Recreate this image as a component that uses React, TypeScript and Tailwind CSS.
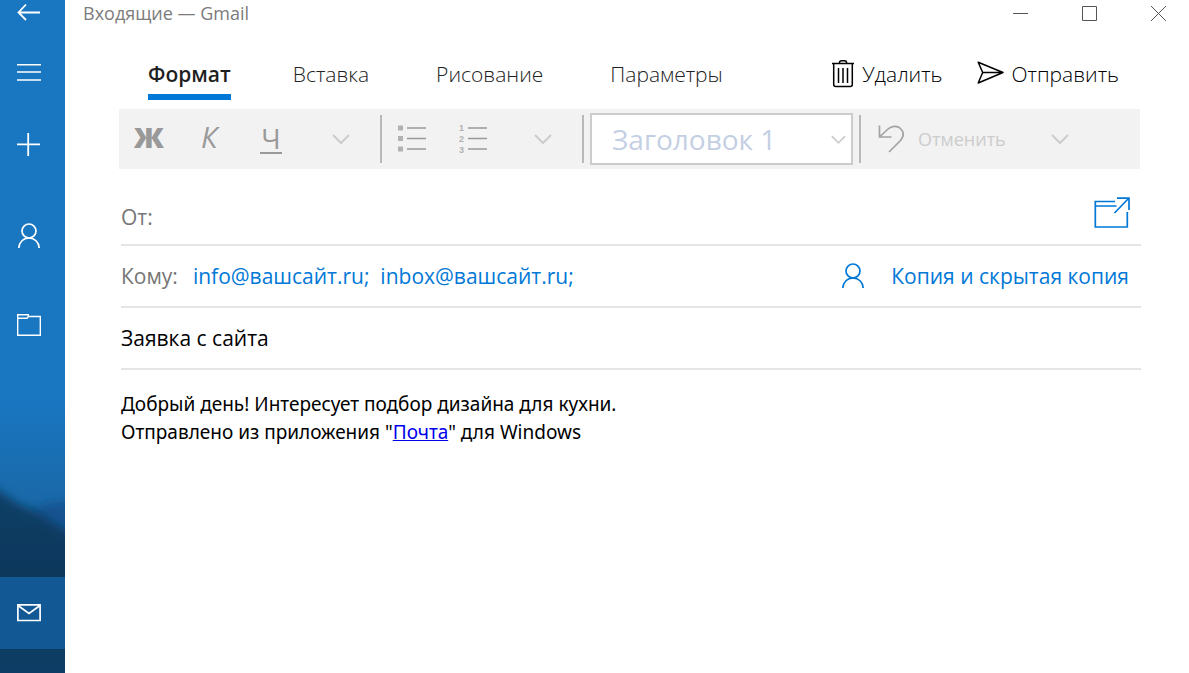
import type { ReactNode } from "react";

const tabs = ["Вставка", "Рисование", "Параметры"];

function PersonIcon() {
  return (
    <svg width="24" height="26" viewBox="0 0 24 26" fill="none" stroke="currentColor" strokeWidth="1.7" aria-hidden>
      <circle cx="12" cy="8" r="7" />
      <path d="M1.800 25C2.200 19 6.400 15 12 15s9.800 4 10.200 10" />
    </svg>
  );
}

function Chevron({ size = 18 }: { size?: number }) {
  return (
    <svg width={size} height={size} viewBox="0 0 18 18" fill="none" stroke="currentColor" strokeWidth="2" aria-hidden>
      <path d="M1 5l8 8 8-8" />
    </svg>
  );
}

function Divider() {
  return <div className="h-12 w-[2px] shrink-0 bg-[#b8b8b8]" />;
}

function NavButton({ label, className, children }: { label: string; className: string; children: ReactNode }) {
  return (
    <button type="button" aria-label={label} className={`flex w-full shrink-0 items-center pl-[17px] ${className}`}>
      {children}
    </button>
  );
}

function Sidebar() {
  return (
    <aside className="relative isolate flex w-[65px] shrink-0 flex-col bg-[#1976c1] text-white">
      {/* размытый силуэт гор на фоне */}
      <div className="absolute inset-x-0 bottom-0 -z-10 h-[273px] overflow-hidden bg-linear-to-b from-[#1976c1] via-[#1a6aaa] via-35% to-[#08365c] to-100%">
        <svg width="65" height="273" viewBox="0 0 65 273" aria-hidden>
          <defs>
            <filter id="haze" x="-50%" y="-50%" width="200%" height="200%">
              <feGaussianBlur stdDeviation="5" />
            </filter>
            <linearGradient id="ridge" x1="0" y1="0" x2="0" y2="1">
              <stop offset="0" stopColor="#0b4068" />
              <stop offset="0.45" stopColor="#07365b" />
              <stop offset="1" stopColor="#0a4069" />
            </linearGradient>
          </defs>
          <path d="M25 116L48 104 90 98v60H25z" fill="#145291" filter="url(#haze)" />
          <path d="M-20 78L2 93 18 104 38 113 55 124 90 144v160H-20z" fill="url(#ridge)" filter="url(#haze)" />
        </svg>
      </div>

      <NavButton label="Назад" className="h-6">
        <svg width="24" height="18" viewBox="0 0 24 18" fill="none" stroke="currentColor" strokeWidth="1.8" aria-hidden>
          <path d="M23 9.500H1.500M9 1.500L1.500 9.500 9 17" />
        </svg>
      </NavButton>
      <NavButton label="Меню" className="mt-3 h-18">
        <svg width="24" height="18" viewBox="0 0 24 18" stroke="currentColor" strokeWidth="1.6" aria-hidden>
          <path d="M0 1.800h24M0 9h24M0 17h24" />
        </svg>
      </NavButton>
      <NavButton label="Создать сообщение" className="h-18">
        <svg width="24" height="24" viewBox="0 0 24 24" stroke="currentColor" strokeWidth="1.8" aria-hidden>
          <path d="M0 12.300h23M11.200 1v23" />
        </svg>
      </NavButton>
      <NavButton label="Учетные записи" className="mt-5 h-18">
        <PersonIcon />
      </NavButton>
      <NavButton label="Папки" className="mt-[17px] h-18">
        <svg width="24" height="22" viewBox="0 0 24 22" fill="none" stroke="currentColor" strokeWidth="1.400" aria-hidden>
          <path d="M.700.700h10.600v1.800h12v18.800H.700zM.700 4.300h9.300l1.300-1.800" />
        </svg>
      </NavButton>
      <NavButton label="Почта" className="mt-auto mb-6 h-18 bg-[#125894]">
        <svg width="24" height="18" viewBox="0 0 24 18" fill="none" stroke="currentColor" strokeWidth="1.700" aria-hidden>
          <path d="M.900.900h22.200v15.600H.900zM1 1.500l11 8 11-8" />
        </svg>
      </NavButton>
    </aside>
  );
}

function TitleBar() {
  return (
    <header className="flex h-7 items-center justify-between pr-[22px] pl-[18px]">
      <h1 className="pb-[2px] text-[18px] leading-6 text-[#7c7c7c]">Входящие — Gmail</h1>
      <div className="flex gap-[53px] text-[#555]">
        <button type="button" aria-label="Свернуть">
          <svg width="16" height="16" viewBox="0 0 16 16" stroke="currentColor" aria-hidden>
            <path d="M0 7.500h15" />
          </svg>
        </button>
        <button type="button" aria-label="Развернуть">
          <svg width="16" height="16" viewBox="0 0 16 16" fill="none" stroke="currentColor" aria-hidden>
            <path d="M.500.500h14v14H.500z" />
          </svg>
        </button>
        <button type="button" aria-label="Закрыть">
          <svg width="16" height="16" viewBox="0 0 16 16" stroke="currentColor" aria-hidden>
            <path d="M0 0l15 15M15 0L0 15" />
          </svg>
        </button>
      </div>
    </header>
  );
}

function CommandBar() {
  return (
    <div className="flex items-start justify-between pt-[30px] pr-[70px] pb-[9px] pl-[83px] text-[21px] leading-8">
      <nav className="flex">
        <button type="button" className="mr-[62px] border-b-6 border-[#0078d7] pb-1 font-semibold text-[#1f1f1f]">
          Формат
        </button>
        <div className="flex gap-[67px] font-light text-[#222]">
          {tabs.map((tab) => (
            <button key={tab} type="button" className="pb-[10px]">
              {tab}
            </button>
          ))}
        </div>
      </nav>
      <div className="flex gap-[34px] font-light text-black">
        <button type="button" className="flex items-center gap-2">
          <svg width="22" height="28" viewBox="0 0 22 28" fill="none" stroke="currentColor" strokeWidth="1.500" aria-hidden>
            <path d="M0 3.500h22M7.500 3.500V2.500Q7.500.800 9.500.800h3q2 0 2 1.700v1M1.700 4v20.500q0 2 2 2h14.600q2 0 2-2V4M6.500 8v15M11 8v15M15.500 8v15" />
          </svg>
          Удалить
        </button>
        <button type="button" className="flex items-center gap-2">
          <svg width="27" height="26" viewBox="0 0 27 26" fill="none" stroke="currentColor" strokeWidth="1.500" strokeLinejoin="round" aria-hidden>
            <path d="M1.200 1.200L26 11.500 1.200 22 5.700 11.500zM5.700 11.500H26" />
          </svg>
          Отправить
        </button>
      </div>
    </div>
  );
}

function Toolbar() {
  return (
    <div className="mr-[49px] ml-[54px] flex h-[60px] items-center bg-[#f2f2f2] text-[#999]">
      <button type="button" aria-label="Полужирный" className="w-[60px] pb-1 text-[29px] leading-9 font-extrabold">
        Ж
      </button>
      <button type="button" aria-label="Курсив" className="w-[60px] pb-1 text-[29px] leading-9 italic">
        К
      </button>
      <button type="button" aria-label="Подчеркнутый" className="ml-[21px] w-[22px] border-b-2 border-[#999] text-[28px] leading-7">
        Ч
      </button>
      <button type="button" aria-label="Другие параметры шрифта" className="ml-[50px] text-[#ccc]">
        <Chevron />
      </button>
      <div className="mr-4 ml-[30px]">
        <Divider />
      </div>
      <button type="button" aria-label="Маркированный список">
        <svg width="30" height="28" viewBox="0 0 30 28" stroke="#999" strokeWidth="1.600" aria-hidden>
          <path d="M0 .500h5v5H0zM0 11h5v5H0zM0 21.500h5v5H0z" fill="#b2b2b2" stroke="none" />
          <path d="M9 3h19M9 13.500h19M9 24h19" />
        </svg>
      </button>
      <button type="button" aria-label="Нумерованный список" className="ml-[31px] flex items-center gap-1">
        <span className="flex flex-col font-['Liberation_Sans',sans-serif] text-[9px] leading-[11px] font-bold text-[#b2b2b2]">
          <span>1</span>
          <span>2</span>
          <span>3</span>
        </span>
        <svg width="19" height="28" viewBox="0 0 19 28" stroke="currentColor" strokeWidth="1.600" aria-hidden>
          <path d="M0 3h19M0 13.500h19M0 24h19" />
        </svg>
      </button>
      <button type="button" aria-label="Другие параметры абзаца" className="ml-[47px] text-[#ccc]">
        <Chevron />
      </button>
      <div className="mr-[6px] ml-[30px]">
        <Divider />
      </div>
      <div className="relative">
        <select
          aria-label="Стиль"
          className="h-[52px] w-[263px] appearance-none border-2 border-[#ccc] bg-white pl-5 text-[28px] text-[#c4cfe3]"
        >
          <option>Заголовок 1</option>
        </select>
        <span className="pointer-events-none absolute top-[19px] right-[7px] text-[#ccc]">
          <Chevron size={15} />
        </span>
      </div>
      <div className="mr-[17px] ml-[6px]">
        <Divider />
      </div>
      <button type="button" className="flex items-center gap-[14px] text-[18px] text-[#ccc]">
        <svg width="26" height="28" viewBox="0 0 26 28" fill="none" stroke="#a3a3a3" strokeWidth="1.700" aria-hidden>
          <path d="M1.500.500V12h12M1.500 12L10 4C13 1 19 0 22.500 3.500c3.800 4 3 8.500 0 12L11 27" />
        </svg>
        Отменить
      </button>
      <button type="button" aria-label="Журнал действий" className="ml-[45px] text-[#ccc]">
        <Chevron />
      </button>
    </div>
  );
}

function MessageFields() {
  return (
    <div className="mr-12 ml-14 text-[21px] leading-8">
      <div className="flex h-[77px] items-end border-b-2 border-[#e5e5e5] pb-[11px]">
        <label htmlFor="from" className="text-[#767676]">
          От:
        </label>
        <input id="from" className="ml-4 min-w-0 flex-1 outline-none" />
        <button type="button" aria-label="Открыть в новом окне" className="mr-[11px] pb-1 text-[#0078d7]">
          <svg width="36" height="32" viewBox="0 0 36 32" fill="none" stroke="currentColor" strokeWidth="1.700" aria-hidden>
            <path d="M21 4.500H1.300v25.500h32V15M1.300 9H22.500M20.500 16L34.500 1.500M23 1.200h12V13" />
          </svg>
        </button>
      </div>
      <div className="flex h-[62px] items-center border-b-2 border-[#e5e5e5]">
        <label htmlFor="to" className="text-[#767676]">
          Кому:
        </label>
        <input
          id="to"
          className="ml-[15px] min-w-0 flex-1 text-[#0078d7] outline-none"
          defaultValue="info@вашсайт.ru;  inbox@вашсайт.ru;"
        />
        <button type="button" className="mr-3 flex items-center gap-[26px] text-[#0078d7]">
          <PersonIcon />
          Копия и скрытая копия
        </button>
      </div>
      <div className="flex h-[62px] items-center border-b-2 border-[#e5e5e5]">
        <input aria-label="Тема" className="w-full text-black outline-none" defaultValue="Заявка с сайта" />
      </div>
    </div>
  );
}

export default function App() {
  return (
    <div className="flex min-h-screen bg-white font-['Open_Sans','Noto_Sans',sans-serif]">
      <Sidebar />
      <main className="min-w-0 flex-1">
        <TitleBar />
        <CommandBar />
        <Toolbar />
        <MessageFields />
        <div className="mr-12 ml-14 pt-5 font-['Noto_Sans',sans-serif] text-[19px] leading-7 text-black">
          <p>Добрый день! Интересует подбор дизайна для кухни.</p>
          <p>
            Отправлено из приложения "
            <a href="#mail" className="text-[#0000ee] underline">
              Почта
            </a>
            " для Windows
          </p>
        </div>
      </main>
    </div>
  );
}
